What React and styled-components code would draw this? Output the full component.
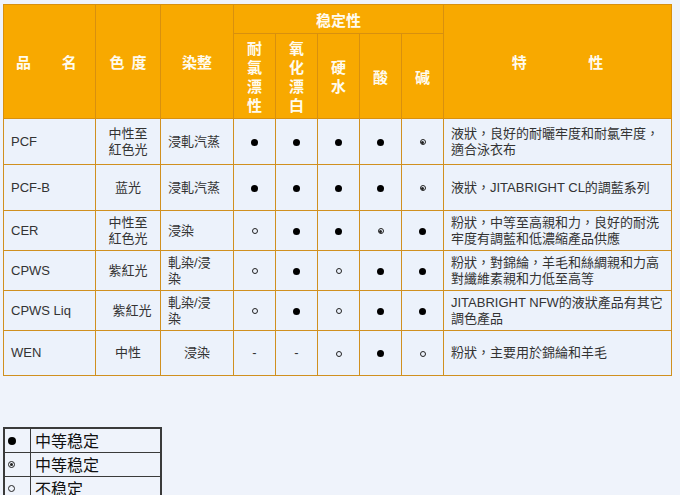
import React from "react"
import styled, { createGlobalStyle } from "styled-components"

const GlobalStyle = createGlobalStyle`
  html, body {
    margin: 0;
    padding: 0;
    background: #eff3fb;
  }
  body {
    font-family: "Liberation Sans", "Noto Sans CJK TC", sans-serif;
  }
`

const Page = styled.div`
  padding: 4px 0 0 3px;
  display: flex;
  flex-direction: column;
  gap: 51px;
`

const Table = styled.table`
  border-collapse: collapse;
  table-layout: fixed;
  width: 669px;
  border: 1px solid #d18a1c;
`

const Head = styled.th`
  background: #f8a900;
  color: #fffbef;
  font-family: "Noto Sans CJK SC", sans-serif;
  font-weight: 700;
  font-size: 15px;
  border: 1px solid #d8900e;
  padding: 0;
  text-align: ${(p) => p.align || "center"};
  padding-left: ${(p) => p.pl || 0}px;
  white-space: pre;
`

const Vertical = styled.div`
  display: flex;
  flex-direction: column;
  align-items: center;
  line-height: 19px;
  font-size: 15px;
`

const Row = styled.tr`
  height: ${(p) => p.h}px;
`

const Cell = styled.td`
  background: #ecf2fb;
  border: 1px solid #d0901f;
  color: #333;
  font-size: 13px;
  line-height: 16px;
  padding: 0 2px;
  padding-left: ${(p) => (p.align === "left" ? 7 : 2 + (p.shift || 0))}px;
  text-align: ${(p) => p.align || "center"};
  vertical-align: middle;
`

const Mark = styled.span`
  display: inline-block;
  box-sizing: border-box;
  width: ${(p) => p.size}px;
  height: ${(p) => p.size}px;
  border-radius: 50%;
  vertical-align: middle;
  position: relative;
  background: ${(p) => (p.kind === "full" ? "#000" : "transparent")};
  border: ${(p) => (p.kind === "full" ? "none" : "1px solid #222")};
  &::after {
    content: "";
    display: ${(p) => (p.kind === "mid" ? "block" : "none")};
    position: absolute;
    left: 50%;
    top: 50%;
    width: 3px;
    height: 3px;
    margin: -1.5px 0 0 -1.5px;
    border-radius: 50%;
    background: #222;
  }
`

const Legend = styled.table`
  border-collapse: collapse;
  width: 159px;
  border: 2px solid #3a3a3a;
`

const LegendRow = styled.tr`
  height: 24px;
`

const LegendMark = styled.td`
  width: 22px;
  border: 1px solid #3a3a3a;
  padding: 0 0 0 3px;
  vertical-align: middle;
`

const LegendText = styled.td`
  border: 1px solid #3a3a3a;
  font-family: "Noto Sans CJK SC", sans-serif;
  font-size: 16px;
  color: #111;
  padding: 0 0 0 4px;
  line-height: 20px;
`

const sym = (k) =>
  k === "-" ? "-" : <Mark kind={k} size={k === "full" ? 7 : 6} />

const F = "full"
const M = "mid"
const L = "low"

const rows = [
  { h: 46, name: "PCF", shade: "中性至\n紅色光", dye: "浸軋汽蒸", marks: [F, F, F, F, M], note: "液狀，良好的耐曬牢度和耐氯牢度，適合泳衣布" },
  { h: 46, name: "PCF-B", shade: "蓝光", dye: "浸軋汽蒸", marks: [F, F, F, F, M], note: "液狀，JITABRIGHT CL的調藍系列" },
  { h: 40, name: "CER", shade: "中性至\n紅色光", dye: "浸染", marks: [L, F, F, M, F], note: "粉狀，中等至高親和力，良好的耐洗牢度有調藍和低濃縮產品供應" },
  { h: 40, name: "CPWS", shade: "紫紅光", dye: "軋染/浸\n染", marks: [L, F, L, F, F], note: "粉狀，對錦綸，羊毛和絲綢親和力高對纖維素親和力低至高等" },
  { h: 40, name: "CPWS Liq", shade: "紫紅光", dye: "軋染/浸\n染", marks: [L, F, L, F, F], note: "JITABRIGHT NFW的液狀產品有其它調色產品", shift: 8 },
  { h: 45, name: "WEN", shade: "中性", dye: "浸染", marks: ["-", "-", L, F, L], note: "粉狀，主要用於錦綸和羊毛", dyeCenter: true },
]

const Lines = ({ text }) =>
  text.split("\n").map((t, i) => <div key={i}>{t}</div>)

export default function App() {
  return (
    <>
      <GlobalStyle />
      <Page>
        <Table>
          <colgroup>
            <col style={{ width: 92 }} />
            <col style={{ width: 65 }} />
            <col style={{ width: 73 }} />
            <col style={{ width: 42 }} />
            <col style={{ width: 42 }} />
            <col style={{ width: 42 }} />
            <col style={{ width: 42 }} />
            <col style={{ width: 42 }} />
            <col />
          </colgroup>
          <thead>
            <tr style={{ height: 29 }}>
              <Head rowSpan={2} align="left" pl={12}>品         名</Head>
              <Head rowSpan={2}>色  度</Head>
              <Head rowSpan={2}>染整</Head>
              <Head colSpan={5}>稳定性</Head>
              <Head rowSpan={2}>特                  性</Head>
            </tr>
            <tr style={{ height: 85 }}>
              {["耐氯漂性", "氧化漂白", "硬水", "酸", "碱"].map((t) => (
                <Head key={t}>
                  <Vertical>
                    {t.split("").map((c, i) => (
                      <span key={i}>{c}</span>
                    ))}
                  </Vertical>
                </Head>
              ))}
            </tr>
          </thead>
          <tbody>
            {rows.map((r) => (
              <Row key={r.name} h={r.h}>
                <Cell align="left">{r.name}</Cell>
                <Cell shift={r.shift}>
                  <Lines text={r.shade} />
                </Cell>
                <Cell align={r.dyeCenter ? "center" : "left"}>
                  <Lines text={r.dye} />
                </Cell>
                {r.marks.map((m, i) => (
                  <Cell key={i}>{sym(m)}</Cell>
                ))}
                <Cell align="left">{r.note}</Cell>
              </Row>
            ))}
          </tbody>
        </Table>
        <Legend>
          <tbody>
            <LegendRow>
              <LegendMark><Mark kind={F} size={8} /></LegendMark>
              <LegendText>中等稳定</LegendText>
            </LegendRow>
            <LegendRow>
              <LegendMark><Mark kind={M} size={7} /></LegendMark>
              <LegendText>中等稳定</LegendText>
            </LegendRow>
            <LegendRow>
              <LegendMark><Mark kind={L} size={7} /></LegendMark>
              <LegendText>不稳定</LegendText>
            </LegendRow>
          </tbody>
        </Legend>
      </Page>
    </>
  )
}
